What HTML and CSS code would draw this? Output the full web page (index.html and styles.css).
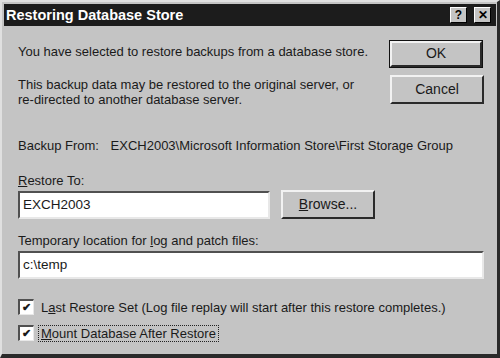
FILE: index.html
```html
<html>
<head>
	<title>Restoring Database Store</title>
	<link rel="stylesheet" href="styles.css">
</head>
<body>
	<div class="window">
		<div class="titlebar">
			<span class="title">Restoring Database Store</span>
			<span class="capbtn help">?</span>
			<span class="capbtn close">&#x2715;</span>
		</div>

		<div class="content">
			<div class="top">
				<div class="intro">
					<p class="line1">You have selected to restore backups from a database store.</p>
					<p class="line2">This backup data may be restored to the original server, or<br>re-directed to another database server.</p>
				</div>
				<div class="buttons">
					<div class="btn ok">OK</div>
					<div class="btn cancel">Cancel</div>
				</div>
			</div>

			<div class="backup">
				<span class="lbl">Backup From:</span>
				<span>EXCH2003\Microsoft Information Store\First Storage Group</span>
			</div>

			<div class="label restore-lbl"><u>R</u>estore To:</div>
			<div class="row">
				<div class="field short">EXCH2003</div>
				<div class="btn browse"><u>B</u>rowse...</div>
			</div>

			<div class="label temp-lbl">Temporary location for <u>l</u>og and patch files:</div>
			<div class="field long">c:\temp</div>

			<div class="check first">
				<span class="box">&#x2714;</span>
				<span class="ctext">L<u>a</u>st Restore Set (Log file replay will start after this restore completes.)</span>
			</div>
			<div class="check">
				<span class="box">&#x2714;</span>
				<span class="ctext focus"><u>M</u>ount Database After Restore</span>
			</div>
		</div>
	</div>
</body>
</html>
```

FILE: styles.css
```css
body
{
	margin: 0;
	background: #c4c4c4;
	font-family: "Liberation Sans", Arial, sans-serif;
	font-size: 13px;
	color: #1a1a1a;
}

.window
{
	width: 500px;
	height: 358px;
	box-sizing: border-box;
	background: #c4c4c4;
	border-top: solid 2px #e0e0e0;
	border-left: solid 2px #e0e0e0;
	border-right: solid 3px #2a2a2a;
	border-bottom: solid 4px #2a2a2a;
	padding: 2px 1px 0 2px;
}

.titlebar
{
	height: 22px;
	background: #1c1c1c;
	display: flex;
	align-items: center;
	padding: 0 5px 0 2px;
}

.title
{
	color: #fff;
	font-weight: bold;
	font-size: 14.5px;
	flex: 1;
}

.capbtn
{
	width: 15px;
	height: 14px;
	background: #c4c4c4;
	border-top: solid 1px #fff;
	border-left: solid 1px #fff;
	border-right: solid 1px #000;
	border-bottom: solid 1px #000;
	color: #000;
	font-weight: bold;
	font-size: 12px;
	line-height: 14px;
	text-align: center;
}

.help
{
	margin-right: 7px;
}

.content
{
	padding: 0 12px 0 14px;
}

.top
{
	display: flex;
	justify-content: space-between;
}

p
{
	margin: 0;
	line-height: 15px;
}

.line1
{
	margin-top: 18px;
}

.line2
{
	margin-top: 18px;
}

.buttons
{
	margin-top: 15px;
	display: flex;
	flex-direction: column;
	gap: 8px;
}

.btn
{
	width: 90px;
	height: 25px;
	box-sizing: border-box;
	background: #c4c4c4;
	border-top: solid 2px #f2f2f2;
	border-left: solid 2px #f2f2f2;
	border-right: solid 2px #2a2a2a;
	border-bottom: solid 2px #2a2a2a;
	text-align: center;
	line-height: 21px;
	font-size: 14px;
}

.ok
{
	height: 26px;
	outline: solid 1px #111;
	width: 92px;
}

.cancel
{
	width: 94px;
	height: 29px;
	line-height: 25px;
}

.backup
{
	margin-top: 31px;
}

.lbl
{
	margin-right: 8px;
}

.label
{
	line-height: 15px;
}

.restore-lbl
{
	margin-top: 20px;
}

.temp-lbl
{
	margin-top: 14px;
}

.row
{
	display: flex;
	align-items: center;
	gap: 11px;
	margin-top: 2px;
}

.field
{
	height: 28px;
	box-sizing: border-box;
	background: #fff;
	border-top: solid 2px #505050;
	border-left: solid 2px #505050;
	border-right: solid 2px #e8e8e8;
	border-bottom: solid 2px #e8e8e8;
	padding-left: 3px;
	line-height: 24px;
	font-size: 13.5px;
}

.short
{
	width: 252px;
}

.browse
{
	width: 94px;
	height: 29px;
	line-height: 25px;
}

.long
{
	width: 466px;
	margin-top: 3px;
}

.check
{
	display: flex;
	align-items: center;
	margin-top: 10px;
	height: 16px;
}

.check.first
{
	margin-top: 20px;
}

.box
{
	width: 16px;
	height: 16px;
	box-sizing: border-box;
	background: #fff;
	border-top: solid 2px #505050;
	border-left: solid 2px #505050;
	border-right: solid 1px #e8e8e8;
	border-bottom: solid 1px #e8e8e8;
	font-size: 11px;
	line-height: 13px;
	text-align: center;
	font-weight: bold;
}

.ctext
{
	margin-left: 7px;
	font-size: 13px;
}

.focus
{
	outline: dotted 1px #222;
	margin-left: 5px;
	padding: 0 2px;
	line-height: 15px;
}
```
